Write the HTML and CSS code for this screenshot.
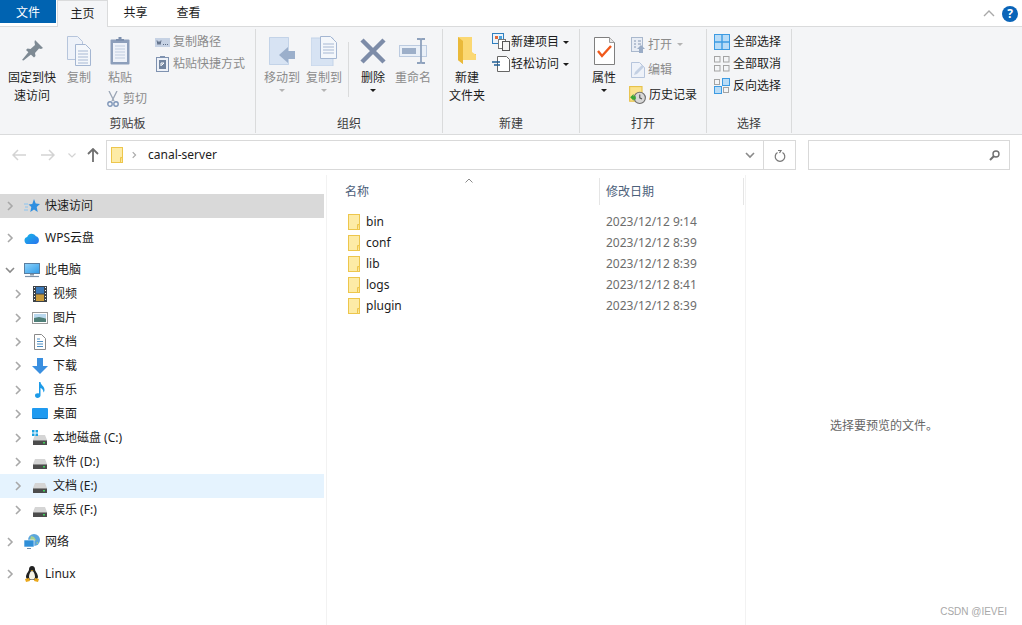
FILE: index.html
```html
<!DOCTYPE html>
<html lang="zh-CN">
<head>
    <meta charset="UTF-8">
    <title>canal-server</title>
    <link rel="stylesheet" href="styles.css">
</head>
<body>
    <svg class="sprite" aria-hidden="true">
        <defs>
            <linearGradient id="cloudFill" x1="0" y1="0" x2="1" y2="1">
                <stop offset="0" stop-color="#16b6e8"/>
                <stop offset="1" stop-color="#2b74ee"/>
            </linearGradient>
            <linearGradient id="screenFill" x1="0" y1="0" x2="1" y2="1">
                <stop offset="0" stop-color="#8fd3fb"/>
                <stop offset="1" stop-color="#2f9be8"/>
            </linearGradient>
        </defs>
        <symbol id="folder" viewBox="0 0 12 16">
            <rect x=".5" y=".5" width="11" height="15" fill="#fdeba6" stroke="#edc64c"/>
            <path d="M9.5 15.5v-5h2" fill="#fbdc7c" stroke="#edc64c"/>
        </symbol>
        <symbol id="chev-right" viewBox="0 0 7 10">
            <path d="M1 1l4 4-4 4" fill="none" stroke="#a8a8a8" stroke-width="1.6"/>
        </symbol>
        <symbol id="chev-down" viewBox="0 0 10 7">
            <path d="M1 1l4 4 4-4" fill="none" stroke="#8a8a8a" stroke-width="1.6"/>
        </symbol>
        <symbol id="drive" viewBox="0 0 16 16">
            <path d="M3 5h10l2 5H1z" fill="#d5d5d5"/>
            <rect x="1" y="10" width="14" height="5" fill="#4c4c4c"/>
            <rect x="1" y="10" width="14" height="1" fill="#8c8c8c"/>
            <rect x="11" y="12" width="2" height="1.5" fill="#3fd05a"/>
        </symbol>
        <symbol id="grid-on" viewBox="0 0 16 16">
            <rect x=".5" y=".5" width="15" height="15" fill="#b9dcf7" stroke="#3d9be2"/>
            <path d="M8 0v16M0 8h16" stroke="#3d9be2" stroke-width="1.4"/>
        </symbol>
    </svg>

    <div class="tabs">
        <div class="tab tab-file">文件</div>
        <div class="tab tab-active">主页</div>
        <div class="tab">共享</div>
        <div class="tab">查看</div>
        <div class="tabs-right">
            <svg width="12" height="7" viewBox="0 0 12 7"><path d="M1 6l5-5 5 5" fill="none" stroke="#a9a9a9" stroke-width="1.4"/></svg>
            <div class="help">?</div>
        </div>
    </div>

    <div class="ribbon">
        <section class="group group-clip">
            <div class="group-body">
                <div class="big big-pin">
                    <div class="big-icon">
                        <svg width="21" height="21" viewBox="0 0 21 21"><path d="M13 0l8 8-2 1-2-.5-4 4.500.5 3-1.500 1.500L4 10l1.500-1.500 3 .5 4.500-4L12.500 2zM6.500 12l2.500 2.500L1.500 20.500 0 20z" fill="#7e8a94"/></svg>
                    </div>
                    <div class="big-label">固定到快<br>速访问</div>
                </div>
                <div class="big big-copy off">
                    <div class="big-icon">
                        <svg width="24" height="30" viewBox="0 0 24 30">
                            <path d="M.5.500h10l5 5v18H.5z" fill="#eef2f9" stroke="#b6c5dc"/>
                            <path d="M8.500 8.500h10l5 5v16h-15z" fill="#f4f7fb" stroke="#a4b6d2"/>
                            <path d="M11 15h10M11 18h10M11 21h10M11 24h10M11 27h10" stroke="#a7b8d3"/>
                        </svg>
                    </div>
                    <div class="big-label">复制</div>
                </div>
                <div class="paste-col">
                    <div class="big big-paste off">
                        <div class="big-icon">
                            <svg width="20" height="29" viewBox="0 0 20 29">
                                <rect x=".5" y="3.500" width="19" height="25" rx="1" fill="#8d9fbb"/>
                                <rect x="3" y="7" width="14" height="19" fill="#eef2f9"/>
                                <path d="M5 10h10M5 13h10M5 16h10M5 19h10M5 22h10" stroke="#c0cde0"/>
                                <path d="M6 5V3h2.500V1h3v2H14v2z" fill="#7d90ae"/>
                            </svg>
                        </div>
                        <div class="big-label">粘贴</div>
                    </div>
                    <div class="row row-cut off">
                        <svg width="12" height="16" viewBox="0 0 12 16">
                            <path d="M2 0l5 10M10 0L5 10" stroke="#9aa5b5" stroke-width="1.300"/>
                            <circle cx="3" cy="13" r="2.200" fill="none" stroke="#7f96b8" stroke-width="1.400"/>
                            <circle cx="9" cy="13" r="2.200" fill="none" stroke="#7f96b8" stroke-width="1.400"/>
                        </svg>
                        <span>剪切</span>
                    </div>
                </div>
                <div class="stack stack-clip off">
                    <div class="row">
                        <svg width="15" height="9" viewBox="0 0 15 9">
                            <rect width="15" height="9" fill="#c6d2e4"/>
                            <path d="M2 2.500l1 4 1-3 1 3 1-4M8 6.500h1M10 6.500h1M12 6.500h1" fill="none" stroke="#52627c" stroke-width=".9"/>
                        </svg>
                        <span>复制路径</span>
                    </div>
                    <div class="row">
                        <svg width="15" height="16" viewBox="0 0 13 16" preserveAspectRatio="xMidYMid meet">
                            <rect x=".5" y="1.500" width="12" height="14" fill="#eef2f9" stroke="#7f92b0"/>
                            <rect x="3" y="4" width="7" height="9" fill="#71849f"/>
                            <path d="M5 10V7h3M8 7L5.500 9.500" fill="none" stroke="#fff"/>
                            <path d="M4 2V0h5v2z" fill="#7f92b0"/>
                        </svg>
                        <span>粘贴快捷方式</span>
                    </div>
                </div>
            </div>
            <div class="group-label">剪贴板</div>
        </section>

        <section class="group group-org">
            <div class="group-body">
                <div class="big big-w42 off">
                    <div class="big-icon">
                        <svg width="26" height="28" viewBox="0 0 26 28">
                            <path d="M0 0h20v28H0z" fill="#d7e3f3"/>
                            <path d="M.5.500h19v27H.500z" fill="none" stroke="#c3d3e8"/>
                            <path d="M10 18l9-8v4h7v8h-7v4z" fill="#9bafcb"/>
                        </svg>
                    </div>
                    <div class="big-label">移动到</div>
                    <div class="caret caret-off"></div>
                </div>
                <div class="big big-w42 off">
                    <div class="big-icon">
                        <svg width="26" height="30" viewBox="0 0 26 30">
                            <path d="M0 2h22v28H0z" fill="#d7e3f3" stroke="#c3d3e8"/>
                            <path d="M9.500.500h10l6 6v16h-16z" fill="#f4f7fb" stroke="#a4b6d2"/>
                            <path d="M12 8h11M12 11h11M12 14h11M12 17h11" stroke="#a7b8d3"/>
                        </svg>
                    </div>
                    <div class="big-label">复制到</div>
                    <div class="caret caret-off"></div>
                </div>
                <div class="group-sep"></div>
                <div class="big big-w42">
                    <div class="big-icon">
                        <svg width="26" height="26" viewBox="0 0 26 26"><path d="M2 2l22 22M24 2L2 24" stroke="#7d8ca8" stroke-width="4.500"/></svg>
                    </div>
                    <div class="big-label">删除</div>
                    <div class="caret"></div>
                </div>
                <div class="big big-w38 off">
                    <div class="big-icon">
                        <svg width="28" height="26" viewBox="0 0 28 26">
                            <rect x=".5" y="7.500" width="27" height="11" fill="#eaf0f8" stroke="#bccbe0"/>
                            <rect x="3" y="10" width="14" height="6" fill="#9dafc9"/>
                            <path d="M19 1h3l1 1 1-1h3M19 25h3l1-1 1 1h3M23 2v22" fill="none" stroke="#8fa2bd" stroke-width="1.800" transform="translate(-1)"/>
                        </svg>
                    </div>
                    <div class="big-label">重命名</div>
                </div>
            </div>
            <div class="group-label">组织</div>
        </section>

        <section class="group group-new">
            <div class="group-body">
                <div class="big big-w48">
                    <div class="big-icon">
                        <svg width="18" height="27" viewBox="0 0 18 27">
                            <path d="M0 0h14v17h4v6H5v4L0 23z" fill="#eec349"/>
                            <path d="M0 0h14v15l4 3v5H5L0 20z" fill="#fbd873"/>
                            <path d="M0 0l5 4v23l-5-4z" fill="#eab93a"/>
                        </svg>
                    </div>
                    <div class="big-label">新建<br>文件夹</div>
                </div>
                <div class="stack stack-new">
                    <div class="row">
                        <svg width="18" height="18" viewBox="0 0 18 18">
                            <rect x=".5" y=".5" width="11" height="10" fill="#eaf3fb" stroke="#2f7fbf"/>
                            <rect x="3" y="3" width="3" height="3" fill="#e06a3a"/>
                            <rect x="7" y="3" width="3" height="3" fill="#4aa3df"/>
                            <rect x="6.500" y="6.500" width="7" height="9" fill="#fff" stroke="#777"/>
                            <rect x="10.500" y="8.500" width="7" height="9" fill="#f4f4f4" stroke="#555"/>
                        </svg>
                        <span>新建项目</span>
                        <div class="caret caret-inline"></div>
                    </div>
                    <div class="row">
                        <svg width="18" height="16" viewBox="0 0 18 16">
                            <path d="M5.500.500h9l3 3v12h-12z" fill="#fff" stroke="#666"/>
                            <path d="M0 6h8M2 9h6" stroke="#1f5f96" stroke-width="1.300"/>
                        </svg>
                        <span>轻松访问</span>
                        <div class="caret caret-inline"></div>
                    </div>
                </div>
            </div>
            <div class="group-label">新建</div>
        </section>

        <section class="group group-open">
            <div class="group-body">
                <div class="big big-w40">
                    <div class="big-icon">
                        <svg width="21" height="28" viewBox="0 0 21 28">
                            <path d="M.5.500h15l5 5v22H.5z" fill="#fff" stroke="#7f7f7f"/>
                            <path d="M15.500.500v5h5" fill="#e8e8e8" stroke="#9a9a9a"/>
                            <path d="M4 14l4 5 9-10" fill="none" stroke="#f0591c" stroke-width="2.400"/>
                        </svg>
                    </div>
                    <div class="big-label">属性</div>
                    <div class="caret"></div>
                </div>
                <div class="stack stack-open">
                    <div class="row off">
                        <svg width="14" height="16" viewBox="0 0 14 16">
                            <rect x=".5" y=".5" width="11" height="14" fill="#e8edf5" stroke="#a9b8cd"/>
                            <path d="M3 4h2M3 7h2M3 10h2M7 4h3M7 7h3" stroke="#8496b2"/>
                            <path d="M10 8l4 4h-2v4H8v-4H6z" fill="#9aacc6"/>
                        </svg>
                        <span>打开</span>
                        <div class="caret caret-inline caret-off"></div>
                    </div>
                    <div class="row off">
                        <svg width="14" height="16" viewBox="0 0 14 16">
                            <path d="M.5.500h8l5 5v10H.5z" fill="#eef2f9" stroke="#b6c5dc"/>
                            <path d="M3 13l1-3 7-7 2 2-7 7z" fill="#c3d0e3"/>
                        </svg>
                        <span>编辑</span>
                    </div>
                    <div class="row">
                        <svg class="history-icon" width="17" height="18" viewBox="0 0 15 16">
                            <rect x=".5" y=".5" width="11" height="13" fill="#fbe38d" stroke="#e7c24c"/>
                            <circle cx="9.500" cy="10.500" r="5" fill="#d8d8d8" stroke="#6f6f6f"/>
                            <path d="M9.500 7.500v3l2 1" fill="none" stroke="#555"/>
                            <path d="M1 10l3-3v2h2v3H4v1z" fill="#3aa535"/>
                        </svg>
                        <span>历史记录</span>
                    </div>
                </div>
            </div>
            <div class="group-label">打开</div>
        </section>

        <section class="group group-select">
            <div class="group-body">
                <div class="stack stack-select">
                    <div class="row">
                        <svg width="16" height="16"><use href="#grid-on"/></svg>
                        <span>全部选择</span>
                    </div>
                    <div class="row">
                        <svg width="16" height="16" viewBox="0 0 16 16" fill="none" stroke="#a4a4a4">
                            <rect x=".5" y=".5" width="5.500" height="5.500"/><rect x="9.500" y=".5" width="5.500" height="5.500"/>
                            <rect x=".5" y="9.500" width="5.500" height="5.500"/><rect x="9.500" y="9.500" width="5.500" height="5.500"/>
                        </svg>
                        <span>全部取消</span>
                    </div>
                    <div class="row">
                        <svg width="16" height="16" viewBox="0 0 16 16">
                            <rect x=".5" y="8.500" width="7" height="7" fill="#b9dcf7" stroke="#3d9be2"/>
                            <rect x="8.500" y=".5" width="7" height="7" fill="#b9dcf7" stroke="#3d9be2"/>
                            <rect x=".5" y="1.500" width="5" height="5" fill="none" stroke="#a4a4a4"/>
                            <rect x="9.500" y="9.500" width="5" height="5" fill="none" stroke="#a4a4a4"/>
                        </svg>
                        <span>反向选择</span>
                    </div>
                </div>
            </div>
            <div class="group-label">选择</div>
        </section>
    </div>

    <div class="address-row">
        <svg class="nav-back" width="14" height="12" viewBox="0 0 14 12"><path d="M6 1L1 6l5 5M1 6h13" fill="none" stroke="#d3d3d3" stroke-width="1.500"/></svg>
        <svg class="nav-fwd" width="14" height="12" viewBox="0 0 14 12"><path d="M8 1l5 5-5 5M13 6H0" fill="none" stroke="#d3d3d3" stroke-width="1.500"/></svg>
        <svg class="nav-down" width="8" height="5" viewBox="0 0 8 5"><path d="M.5.500L4 4 7.500.5" fill="none" stroke="#d3d3d3" stroke-width="1.200"/></svg>
        <svg class="nav-up" width="12" height="14" viewBox="0 0 12 14"><path d="M1 6l5-5 5 5M6 1v13" fill="none" stroke="#6f6f6f" stroke-width="1.800"/></svg>
        <div class="address">
            <svg class="addr-folder" width="12" height="16"><use href="#folder"/></svg>
            <svg class="addr-chev" width="5" height="8"><use href="#chev-right"/></svg>
            <span class="addr-text">canal-server</span>
            <svg class="addr-drop" width="10" height="7"><use href="#chev-down"/></svg>
            <div class="addr-refresh">
                <svg width="12" height="13" viewBox="0 0 12 13"><path d="M4 1.500h3L5.500 4M8.500 3.500a4.800 4.800 0 1 1-5 0" fill="none" stroke="#767676" stroke-width="1.200"/></svg>
            </div>
        </div>
        <div class="search">
            <svg width="11" height="11" viewBox="0 0 11 11"><circle cx="7" cy="4" r="3" fill="none" stroke="#6f6f6f" stroke-width="1.400"/><path d="M5 6L1 10" stroke="#6f6f6f" stroke-width="2"/></svg>
        </div>
    </div>

    <div class="main">
        <nav class="sidebar">
            <div class="nav-row top hover">
                <svg class="chev" width="7" height="10"><use href="#chev-right"/></svg>
                <svg class="nav-icon" width="16" height="16" viewBox="0 0 16 16">
                    <path d="M10 1l1.700 4.500L16 6l-3.300 3 1 5-3.700-2.600L6.300 14l1-5L4.500 6.500 8.300 6z" fill="#2f8fe0"/>
                    <path d="M0 6h4M1 9h3M0 12h4" stroke="#8cc4f0"/>
                </svg>
                <span>快速访问</span>
            </div>
            <div class="nav-row top">
                <svg class="chev" width="7" height="10"><use href="#chev-right"/></svg>
                <svg class="nav-icon" width="16" height="16" viewBox="0 0 16 16">
                    <path d="M4 14a3.500 3.500 0 0 1-.8-6.900A4.800 4.800 0 0 1 12 6.300 4 4 0 0 1 12 14z" fill="url(#cloudFill)"/>
                </svg>
                <span>WPS云盘</span>
            </div>
            <div class="nav-row top open">
                <svg class="chev" width="10" height="7"><use href="#chev-down"/></svg>
                <svg class="nav-icon" width="16" height="16" viewBox="0 0 16 16">
                    <rect x=".5" y="1.500" width="15" height="10" fill="url(#screenFill)" stroke="#5a7ea0"/>
                    <path d="M6 12h4v1.500H6z" fill="#8c9aa8"/>
                    <path d="M1 14.500h14" stroke="#7f93a8" stroke-width="1.200"/>
                </svg>
                <span>此电脑</span>
            </div>
            <div class="nav-row sub">
                <svg class="chev" width="7" height="10"><use href="#chev-right"/></svg>
                <svg class="nav-icon" width="16" height="16" viewBox="0 0 16 16">
                    <rect x="1" y="0" width="14" height="16" fill="#3c4248"/>
                    <rect x="4" y="1" width="8" height="6.500" fill="#3a78b8"/>
                    <rect x="4" y="8.500" width="8" height="6.500" fill="#c99a3a"/>
                    <path d="M2 1.500h1M2 4.500h1M2 7.500h1M2 10.500h1M2 13.500h1M13 1.500h1M13 4.500h1M13 7.500h1M13 10.500h1M13 13.500h1" stroke="#fff"/>
                </svg>
                <span>视频</span>
            </div>
            <div class="nav-row sub">
                <svg class="chev" width="7" height="10"><use href="#chev-right"/></svg>
                <svg class="nav-icon" width="16" height="16" viewBox="0 0 16 16">
                    <rect x=".5" y="2.500" width="15" height="11" fill="#fff" stroke="#9a9a9a"/>
                    <rect x="2" y="4" width="12" height="4" fill="#b9d8ee"/>
                    <path d="M2 8l5-1 7 1.500V12H2z" fill="#4f7f78"/>
                </svg>
                <span>图片</span>
            </div>
            <div class="nav-row sub">
                <svg class="chev" width="7" height="10"><use href="#chev-right"/></svg>
                <svg class="nav-icon" width="16" height="16" viewBox="0 0 16 16">
                    <path d="M2.500.500h7l4 4v11h-11z" fill="#fff" stroke="#8a8a8a"/>
                    <path d="M5 5h3M5 7.500h6M5 10h6M5 12.500h6" stroke="#4c8fc4"/>
                </svg>
                <span>文档</span>
            </div>
            <div class="nav-row sub">
                <svg class="chev" width="7" height="10"><use href="#chev-right"/></svg>
                <svg class="nav-icon" width="16" height="16" viewBox="0 0 16 16"><path d="M5 0h6v8h5l-8 8-8-8h5z" fill="#3a8fe0"/></svg>
                <span>下载</span>
            </div>
            <div class="nav-row sub">
                <svg class="chev" width="7" height="10"><use href="#chev-right"/></svg>
                <svg class="nav-icon" width="16" height="16" viewBox="0 0 16 16">
                    <path d="M7 0h1.500c0 3 4 4 4 8 0 1-.5 2-1 2.500C11.500 8 10 6.500 8.500 6v7.500C8.500 15 7 16 5.500 16S3 15 3 13.500 4.500 11 7 11.500z" fill="#1d9be8"/>
                </svg>
                <span>音乐</span>
            </div>
            <div class="nav-row sub">
                <svg class="chev" width="7" height="10"><use href="#chev-right"/></svg>
                <svg class="nav-icon" width="16" height="16" viewBox="0 0 16 16">
                    <rect y="2" width="16" height="11" rx="1" fill="#1f9af0"/>
                    <path d="M1 12.500h14" stroke="#0f6fb8"/>
                </svg>
                <span>桌面</span>
            </div>
            <div class="nav-row sub">
                <svg class="chev" width="7" height="10"><use href="#chev-right"/></svg>
                <svg class="nav-icon" width="16" height="16" viewBox="0 0 16 16">
                    <use href="#drive"/>
                    <path d="M0 0h2.500v2.500H0zM3.500 0H6v2.500H3.500zM0 3.500h2.500V6H0zM3.500 3.500H6V6H3.500z" fill="#1ba1e2"/>
                </svg>
                <span>本地磁盘 (C:)</span>
            </div>
            <div class="nav-row sub">
                <svg class="chev" width="7" height="10"><use href="#chev-right"/></svg>
                <svg class="nav-icon" width="16" height="16"><use href="#drive"/></svg>
                <span>软件 (D:)</span>
            </div>
            <div class="nav-row sub selected">
                <svg class="chev" width="7" height="10"><use href="#chev-right"/></svg>
                <svg class="nav-icon" width="16" height="16"><use href="#drive"/></svg>
                <span>文档 (E:)</span>
            </div>
            <div class="nav-row sub last">
                <svg class="chev" width="7" height="10"><use href="#chev-right"/></svg>
                <svg class="nav-icon" width="16" height="16"><use href="#drive"/></svg>
                <span>娱乐 (F:)</span>
            </div>
            <div class="nav-row top">
                <svg class="chev" width="7" height="10"><use href="#chev-right"/></svg>
                <svg class="nav-icon" width="16" height="16" viewBox="0 0 16 16">
                    <circle cx="10" cy="6" r="6" fill="#5ba6dc"/>
                    <path d="M7 2l3 1 2 3-3 2-3-2zM12 9l2-1v2z" fill="#a6cf8e"/>
                    <rect x="0" y="6" width="10" height="7" fill="#2f8fd8" stroke="#fff" stroke-width=".6"/>
                    <path d="M3 14h4v1H3z" fill="#6f8ca8"/>
                </svg>
                <span>网络</span>
            </div>
            <div class="nav-row top">
                <svg class="chev" width="7" height="10"><use href="#chev-right"/></svg>
                <svg class="nav-icon" width="16" height="16" viewBox="0 0 16 16">
                    <path d="M8 0c2 0 3 1.500 3 3.500 0 2 3 4 3 7.500 0 2-2 3-6 3s-6-1-6-3c0-3.500 3-5.500 3-7.500C5 1.500 6 0 8 0z" fill="#222"/>
                    <path d="M8 5c1.500 0 3 3 3 6 0 2-1.500 2.500-3 2.500S5 13 5 11c0-3 1.500-6 3-6z" fill="#f7f3e6"/>
                    <path d="M6.500 4L8 5l1.500-1z" fill="#eaa81c"/>
                    <path d="M1 13l4-1 1 3-4 1zM15 13l-4-1-1 3 4 1z" fill="#eaa81c"/>
                </svg>
                <span>Linux</span>
            </div>
        </nav>

        <div class="content">
            <div class="list-head">
                <svg class="sort-mark" width="8" height="5" viewBox="0 0 8 5"><path d="M.5 4.500L4 1l3.500 3.500" fill="none" stroke="#8a8a8a"/></svg>
                <div class="col col-name">名称</div>
                <div class="col col-date">修改日期</div>
            </div>
            <div class="list">
                <div class="file"><svg width="12" height="16"><use href="#folder"/></svg><span class="file-name">bin</span><span class="file-date">2023/12/12 9:14</span></div>
                <div class="file"><svg width="12" height="16"><use href="#folder"/></svg><span class="file-name">conf</span><span class="file-date">2023/12/12 8:39</span></div>
                <div class="file"><svg width="12" height="16"><use href="#folder"/></svg><span class="file-name">lib</span><span class="file-date">2023/12/12 8:39</span></div>
                <div class="file"><svg width="12" height="16"><use href="#folder"/></svg><span class="file-name">logs</span><span class="file-date">2023/12/12 8:41</span></div>
                <div class="file"><svg width="12" height="16"><use href="#folder"/></svg><span class="file-name">plugin</span><span class="file-date">2023/12/12 8:39</span></div>
            </div>
        </div>

        <aside class="preview">选择要预览的文件。</aside>
    </div>

    <div class="watermark">CSDN @IEVEI</div>
</body>
</html>
```

FILE: styles.css
```css
* {
    box-sizing: border-box;
}
html, body {
    height: 100%;
}
body {
    margin: 0;
    position: relative;
    overflow: hidden;
    background-color: #fff;
    color: #1c1c1c;
    font-family: "Noto Sans", "Noto Sans CJK SC", sans-serif;
    font-size: 12px;
    line-height: 18px;
}
svg {
    display: block;
    flex: none;
}
.sprite {
    width: 0;
    height: 0;
}

/* tabs */
.tabs {
    display: flex;
    height: 27px;
    border-bottom: 1px solid #dadbdc;
}
.tab {
    width: 53px;
    height: 26px;
    line-height: 25px;
    text-align: center;
}
.tab-file {
    width: 56px;
    margin-right: 1px;
    background-color: #0063b1;
    color: #fff;
    height: 23px;
    line-height: 25px;
}
.tab-active {
    width: 51px;
    height: 27px;
    background-color: #f4f5f7;
    border: 1px solid #dadbdc;
    border-bottom: none;
    margin-right: 1px;
}
.tabs-right {
    margin-left: auto;
    display: flex;
    align-items: center;
    gap: 7px;
    padding-right: 4px;
    padding-top: 1px;
}
.help {
    width: 16px;
    height: 16px;
    border-radius: 50%;
    background-color: #0a64b8;
    color: #fff;
    font-weight: 700;
    font-size: 12px;
    line-height: 16px;
    text-align: center;
}

/* ribbon */
.ribbon {
    display: flex;
    height: 108px;
    padding: 2px 0 1px;
    background-color: #f4f5f7;
    border-bottom: 1px solid #dadbdc;
}
.group {
    display: flex;
    flex-direction: column;
    border-right: 1px solid #dadbdc;
}
.group-clip { width: 256px; }
.group-org { width: 187px; }
.group-new { width: 137px; }
.group-open { width: 127px; }
.group-select { width: 85px; }
.group-body {
    flex: 1;
    display: flex;
    padding-top: 3px;
}
.group-label {
    height: 20px;
    line-height: 22px;
    text-align: center;
    color: #3c3c3c;
}
.group-clip .group-body { padding-left: 4px; }
.group-org .group-body { padding-left: 5px; }
.group-open .group-body { padding-left: 4px; }
.group-select .group-body { padding-left: 7px; }
.group-sep {
    width: 1px;
    height: 55px;
    margin: 10px 3px 0;
    background-color: #dadbdc;
}
.big {
    display: flex;
    flex-direction: column;
    align-items: center;
    flex: none;
}
.big-icon {
    height: 37px;
    display: flex;
    align-items: center;
    justify-content: center;
}
.big-label {
    text-align: center;
}
.big-pin { width: 56px; }
.big-copy { width: 38px; }
.big-paste { width: 44px; }
.big-w42 { width: 42px; }
.big-w38 { width: 38px; }
.big-w48 { width: 48px; }
.big-w40 { width: 40px; }
.off {
    color: #8b8b8b;
}
.caret {
    width: 0;
    height: 0;
    margin-top: 2px;
    border-left: 3px solid transparent;
    border-right: 3px solid transparent;
    border-top: 3px solid #1c1c1c;
}
.caret-off {
    border-top-color: #b4b4b4;
}
.caret-inline {
    margin-top: 0;
    margin-left: 3px;
}
.paste-col {
    width: 54px;
    flex: none;
}
.row {
    display: flex;
    align-items: center;
    gap: 4px;
    height: 22px;
}
.row-cut {
    margin-top: 1px;
    padding-left: 9px;
}
.stack {
    display: flex;
    flex-direction: column;
    flex: none;
    margin-top: -1px;
}
.stack-clip { margin-left: 3px; }
.stack-clip .row { gap: 3px; }
.stack-new { margin-left: 1px; }
.stack-new .row { gap: 1px; }
.stack-open {
    margin-left: 7px;
    margin-top: 0;
}
.stack-open .row {
    height: 25px;
    gap: 3px;
}
.stack-open .caret-inline { margin-left: 2px; }
.history-icon { margin-left: -2px; }
.stack-select .row { gap: 3px; }

/* address bar */
.address-row {
    display: flex;
    align-items: center;
    height: 40px;
    padding: 5px 0 5px 12px;
}
.nav-fwd { margin-left: 15px; }
.nav-down { margin-left: 13px; }
.nav-up { margin-left: 11px; }
.address {
    display: flex;
    align-items: center;
    width: 690px;
    height: 30px;
    margin-left: 7px;
    border: 1px solid #d9d9d9;
}
.addr-folder { margin-left: 4px; }
.addr-chev { margin-left: 9px; }
.addr-text {
    margin-left: 11px;
    color: #1c1c1c;
}
.addr-drop { margin-left: auto; margin-right: 8px; }
.addr-refresh {
    width: 32px;
    height: 100%;
    border-left: 1px solid #d9d9d9;
    display: flex;
    align-items: center;
    justify-content: center;
}
.search {
    display: flex;
    align-items: center;
    justify-content: flex-end;
    width: 202px;
    height: 30px;
    margin-left: 12px;
    padding-right: 9px;
    border: 1px solid #d9d9d9;
}

/* main area */
.main {
    display: grid;
    grid-template-columns: 327px 419px 1fr;
    height: 450px;
}
.sidebar {
    padding-top: 19px;
    border-right: 1px solid #f2f2f2;
}
.nav-row {
    display: flex;
    align-items: center;
    width: 324px;
    height: 24px;
    color: #1c1c1c;
}
.nav-row.top {
    margin-bottom: 8px;
    padding-left: 7px;
}
.nav-row.sub {
    padding-left: 15px;
}
.nav-row.last {
    margin-bottom: 8px;
}
.chev { margin-right: 10px; }
.nav-icon { margin-right: 5px; }
.nav-row.open {
    margin-bottom: 0;
    padding-left: 5px;
}
.nav-row.open .chev { margin-right: 9px; }
.hover { background-color: #d9d9d9; }
.selected { background-color: #e5f3fe; }

.list-head {
    position: relative;
    display: flex;
    height: 27px;
    margin-top: 3px;
    color: #4c607a;
}
.sort-mark {
    position: absolute;
    left: 138px;
    top: 0;
}
.col {
    height: 27px;
    line-height: 28px;
}
.col-name {
    width: 273px;
    padding-left: 18px;
    border-right: 1px solid #e5e5e5;
}
.col-date {
    width: 144px;
    padding-left: 6px;
    border-right: 1px solid #e5e5e5;
}
.list {
    padding-top: 6px;
    padding-left: 21px;
}
.file {
    display: flex;
    align-items: center;
    height: 21px;
}
.file-name {
    width: 240px;
    margin-left: 6px;
}
.file-date {
    color: #6d6d6d;
}
.preview {
    border-left: 1px solid #f2f2f2;
    display: flex;
    align-items: center;
    justify-content: center;
    padding-top: 52px;
    color: #666;
    margin-left: -1px;
}
.watermark {
    position: absolute;
    right: 15px;
    bottom: 5px;
    color: #a8a8a8;
    font-family: "Liberation Sans", sans-serif;
    font-size: 10px;
    line-height: 16px;
}
```
